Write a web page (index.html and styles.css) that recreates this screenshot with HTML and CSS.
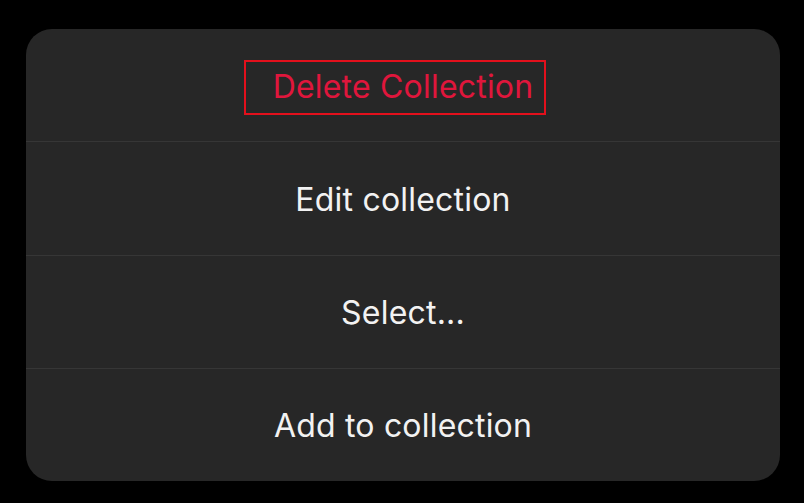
FILE: index.html
```html
<!DOCTYPE html>
<html>
<head>
<meta charset="utf-8">
<link rel="stylesheet" href="styles.css">
</head>
<body>
<div class="sheet">
  <div class="row destructive">
    <span class="label">Delete Collection</span>
    <span class="highlight"></span>
  </div>
  <div class="row"><span class="label">Edit collection</span></div>
  <div class="row"><span class="label">Select...</span></div>
  <div class="row"><span class="label">Add to collection</span></div>
</div>
</body>
</html>
```
FILE: styles.css
```css
html, body {
  margin: 0;
  padding: 0;
  background: #000;
}
body {
  width: 804px;
  height: 503px;
  padding: 29px 0 0 26px;
  box-sizing: border-box;
  font-family: Inter, "Noto Sans", sans-serif;
}
.sheet {
  width: 754px;
  height: 452px;
  background: #272727;
  border-radius: 26px;
  display: flex;
  flex-direction: column;
  overflow: hidden;
}
.row {
  position: relative;
  flex: 1;
  display: flex;
  align-items: center;
  justify-content: center;
  border-top: 1px solid #363636;
}
.row:first-child {
  border-top: none;
}
.label {
  color: #f2f2f2;
  font-size: 32px;
  letter-spacing: 0.2px;
  padding-top: 2px;
}
.destructive .label {
  color: #e0163c;
}
.highlight {
  position: absolute;
  left: 218px;
  top: 31px;
  width: 302px;
  height: 55px;
  box-sizing: border-box;
  border: 2px solid #e3101c;
}
```
